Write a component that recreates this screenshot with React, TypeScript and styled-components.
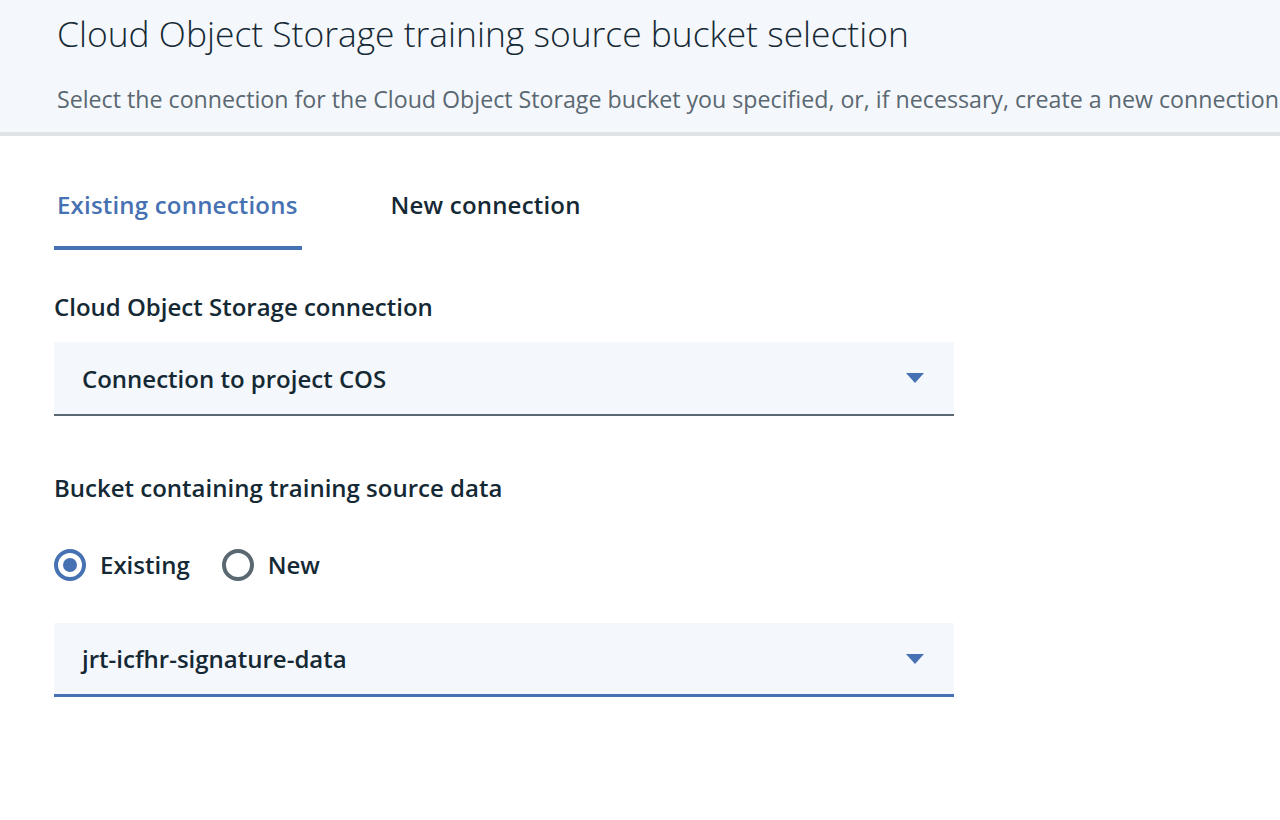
import React, { useState } from "react";
import styled, { createGlobalStyle } from "styled-components";

const Global = createGlobalStyle`
  html, body { margin: 0; padding: 0; background: #ffffff; }
  body { font-family: "Open Sans", "Noto Sans", sans-serif; color: #152935; }
  * { box-sizing: border-box; }
`;

const Page = styled.div`
  width: 1280px;
  height: 820px;
  overflow: hidden;
  background: #ffffff;
`;

const Header = styled.header`
  height: 136px;
  background: #f4f7fb;
  border-bottom: 4px solid #dfe3e6;
  padding: 9px 0 0 57px;
  white-space: nowrap;
  overflow: hidden;
`;

const Title = styled.h1`
  margin: 0;
  font-size: 35.4px;
  font-weight: 300;
  line-height: 48px;
  color: #152935;
`;

const Subtitle = styled.p`
  margin: 26px 0 0;
  font-size: 23.2px;
  font-weight: 400;
  line-height: 32px;
  color: #5a6872;
`;

const Body = styled.main`
  padding: 44px 0 0 54px;
  width: 954px;
`;

const Tabs = styled.div`
  display: flex;
  gap: 86px;
`;

const Tab = styled.button<{ $active?: boolean }>`
  all: unset;
  cursor: pointer;
  padding: 8px 4px 24px 3px;
  font-family: "Open Sans", sans-serif;
  font-size: 24px;
  font-weight: 600;
  letter-spacing: 0.2px;
  line-height: 34px;
  color: ${(p) => (p.$active ? "#4671b2" : "#152935")};
  border-bottom: 4px solid ${(p) => (p.$active ? "#4671b2" : "transparent")};
`;

const Field = styled.section<{ $top: number }>`
  margin-top: ${(p) => p.$top}px;
  display: flex;
  flex-direction: column;
`;

const Label = styled.div`
  font-size: 24px;
  font-weight: 600;
  line-height: 34px;
  color: #152935;
`;

const Select = styled.div<{ $focused?: boolean; $top: number }>`
  margin-top: ${(p) => p.$top}px;
  height: 74px;
  background: #f4f7fb;
  border-bottom: ${(p) => (p.$focused ? "3px solid #4671b2" : "2px solid #5a6872")};
  display: flex;
  align-items: center;
  justify-content: space-between;
  padding: 0 30px 0 28px;
`;

const SelectText = styled.span`
  font-size: 24px;
  font-weight: 600;
  color: #152935;
`;

const Caret = () => (
  <svg width="18" height="10" viewBox="0 0 18 10" aria-hidden="true">
    <path d="M0 0 H18 L9 10 Z" fill="#4671b2" />
  </svg>
);

const RadioGroup = styled.div`
  margin-top: 43px;
  display: flex;
  align-items: center;
  gap: 32px;
`;

const RadioLabel = styled.label`
  display: flex;
  align-items: center;
  gap: 14px;
  font-size: 24px;
  font-weight: 600;
  color: #152935;
  cursor: pointer;
`;

const RadioCircle = styled.span<{ $checked?: boolean }>`
  width: 32px;
  height: 32px;
  border-radius: 50%;
  border: 4px solid ${(p) => (p.$checked ? "#4671b2" : "#5a6872")};
  display: flex;
  align-items: center;
  justify-content: center;
  &::after {
    content: "";
    width: 14px;
    height: 14px;
    border-radius: 50%;
    background: ${(p) => (p.$checked ? "#4671b2" : "transparent")};
  }
`;

export default function App() {
  const [tab, setTab] = useState(0);
  const [bucket, setBucket] = useState("existing");
  return (
    <Page>
      <Global />
      <Header>
        <Title>Cloud Object Storage training source bucket selection</Title>
        <Subtitle>
          Select the connection for the Cloud Object Storage bucket you specified, or, if necessary, create a new connection
        </Subtitle>
      </Header>
      <Body>
        <Tabs>
          <Tab $active={tab === 0} onClick={() => setTab(0)}>Existing connections</Tab>
          <Tab $active={tab === 1} onClick={() => setTab(1)}>New connection</Tab>
        </Tabs>
        <Field $top={40}>
          <Label>Cloud Object Storage connection</Label>
          <Select $top={18}>
            <SelectText>Connection to project COS</SelectText>
            <Caret />
          </Select>
        </Field>
        <Field $top={55}>
          <Label>Bucket containing training source data</Label>
          <RadioGroup>
            <RadioLabel onClick={() => setBucket("existing")}>
              <RadioCircle $checked={bucket === "existing"} />
              Existing
            </RadioLabel>
            <RadioLabel onClick={() => setBucket("new")}>
              <RadioCircle $checked={bucket === "new"} />
              New
            </RadioLabel>
          </RadioGroup>
          <Select $top={42} $focused>
            <SelectText>jrt-icfhr-signature-data</SelectText>
            <Caret />
          </Select>
        </Field>
      </Body>
    </Page>
  );
}
